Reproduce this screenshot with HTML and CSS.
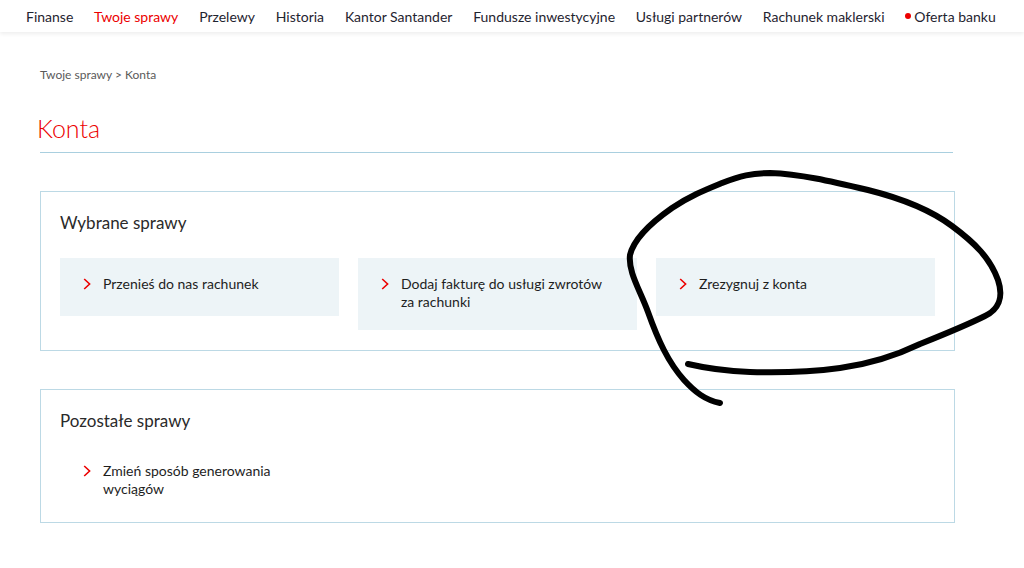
FILE: index.html
```html
<!DOCTYPE html>
<html lang="pl">
<head>
    <meta charset="UTF-8">
    <title>Konta - Twoje sprawy</title>
    <link rel="stylesheet" href="styles.css">
</head>
<body>
    <header class="topnav">
        <a href="#">Finanse</a>
        <a href="#" class="active">Twoje sprawy</a>
        <a href="#">Przelewy</a>
        <a href="#">Historia</a>
        <a href="#">Kantor Santander</a>
        <a href="#">Fundusze inwestycyjne</a>
        <a href="#">Usługi partnerów</a>
        <a href="#">Rachunek maklerski</a>
        <a href="#" class="offer"><span class="dot"></span>Oferta banku</a>
    </header>

    <main class="page">
        <div class="breadcrumb">Twoje sprawy &gt; Konta</div>
        <h1 class="title">Konta</h1>

        <section class="box">
            <h2>Wybrane sprawy</h2>
            <div class="tiles">
                <a href="#" class="tile">
                    <svg class="chev" viewBox="0 0 8 12"><path d="M1.2 1 L6.6 6 L1.2 11"/></svg>
                    <span>Przenieś do nas rachunek</span>
                </a>
                <a href="#" class="tile">
                    <svg class="chev" viewBox="0 0 8 12"><path d="M1.2 1 L6.6 6 L1.2 11"/></svg>
                    <span>Dodaj fakturę do usługi zwrotów za rachunki</span>
                </a>
                <a href="#" class="tile">
                    <svg class="chev" viewBox="0 0 8 12"><path d="M1.2 1 L6.6 6 L1.2 11"/></svg>
                    <span>Zrezygnuj z konta</span>
                </a>
            </div>
        </section>

        <section class="box">
            <h2>Pozostałe sprawy</h2>
            <div class="tiles">
                <a href="#" class="tile plain">
                    <svg class="chev" viewBox="0 0 8 12"><path d="M1.2 1 L6.6 6 L1.2 11"/></svg>
                    <span>Zmień sposób generowania wyciągów</span>
                </a>
            </div>
        </section>
    </main>

    <!-- hand drawn marker round the third tile -->
    <svg class="scribble" viewBox="0 0 1024 568">
        <path d="M720 403 C705 400 695 392 684 380 C668 362 658 340 648 312 C640 290 628 272 630 255 C634 238 652 222 672 208 C690 196 705 190 722 183 C740 176 752 173 770 173 C800 174 830 181 868 190 C900 198 928 208 952 226 C975 243 990 258 998 280 C1004 298 998 310 985 316 C965 326 945 334 920 344 C895 356 870 364 840 368 C810 372 780 373 750 372 C725 371 705 368 688 364"/>
    </svg>
</body>
</html>
```

FILE: styles.css
```css
body {
    margin: 0;
    font-family: Lato, "Open Sans", sans-serif;
    color: #222;
    background: #fff;
}
a {
    color: inherit;
    text-decoration: none;
}

.topnav {
    height: 32px;
    display: flex;
    align-items: center;
    gap: 20.8px;
    padding-left: 26px;
    font-size: 14px;
    color: #1f2430;
    box-shadow: 0 2px 4px rgba(0, 0, 0, 0.07);
}
.topnav .active {
    color: #ec0000;
}
.topnav .offer {
    display: flex;
    align-items: center;
}
.topnav .dot {
    width: 6px;
    height: 6px;
    border-radius: 50%;
    background: #ec0000;
    margin-right: 3px;
}

.page {
    width: 915px;
    padding-left: 40px;
}
.breadcrumb {
    margin-top: 35px;
    font-size: 12px;
    line-height: 16px;
    color: #5a5a5a;
}
.title {
    margin: 30px 2px 0 0;
    padding-bottom: 9px;
    border-bottom: 1px solid #a9cfdf;
    font-size: 25px;
    line-height: 30px;
    font-weight: 300;
    color: #ec0000;
    text-indent: -3px;
}

.box {
    margin-top: 38px;
    border: 1px solid #bcd9e5;
    padding: 20px 19px;
}
.box h2 {
    margin: 0 0 24px;
    font-size: 17px;
    line-height: 22px;
    font-weight: 400;
    color: #2a2a2a;
}
.tiles {
    display: flex;
    align-items: flex-start;
    gap: 19px;
}
.tile {
    width: 279px;
    min-height: 58px;
    box-sizing: border-box;
    display: flex;
    gap: 12px;
    padding: 17px 20px 19px 23px;
    background: #edf4f7;
    font-size: 14px;
    line-height: 18px;
    color: #1e1e1e;
}
.tile.plain {
    min-height: 0;
    background: none;
    padding-top: 6px;
    padding-bottom: 4px;
}
.chev {
    flex: none;
    width: 8px;
    height: 12px;
    margin-top: 3px;
    fill: none;
    stroke: #ec0000;
    stroke-width: 1.6;
}

.scribble {
    position: absolute;
    left: 0;
    top: 0;
    width: 1024px;
    height: 568px;
    pointer-events: none;
    fill: none;
    stroke: #000;
    stroke-width: 6;
    stroke-linecap: round;
    stroke-linejoin: round;
}
```
